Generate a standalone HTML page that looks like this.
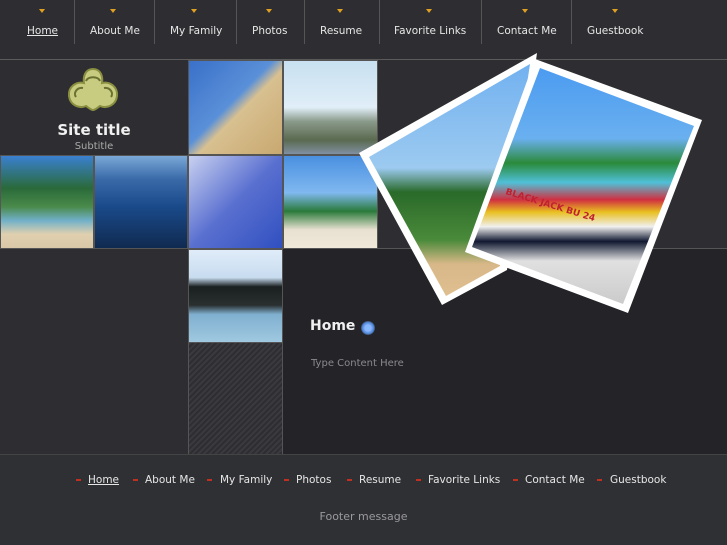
<!DOCTYPE html>
<html><head><style>
*{margin:0;padding:0;box-sizing:border-box}
body{width:727px;height:545px;overflow:hidden;background:#2e2e32;font-family:"DejaVu Sans","Liberation Sans",sans-serif;position:relative}
.a{position:absolute}
.nav{color:#e6e6e6;font-size:10.5px;top:25px;white-space:nowrap}
.car{position:absolute;top:9px;width:6px;height:4px;border-left:3px solid transparent;border-right:3px solid transparent;border-top:4px solid #e0a020}
.sep{position:absolute;top:0;width:1px;height:44px;background:#555}
.t{position:absolute;border:1px solid #555}
.f{color:#e6e6e6;font-size:10.5px;top:474px;white-space:nowrap}
.b{position:absolute;top:479px;width:5px;height:2px;background:#c03020}
</style></head><body>
<div class="a nav" style="left:27px;text-decoration:underline">Home</div>
<div class="a nav" style="left:90px">About Me</div>
<div class="a nav" style="left:170px">My Family</div>
<div class="a nav" style="left:252px">Photos</div>
<div class="a nav" style="left:320px">Resume</div>
<div class="a nav" style="left:394px">Favorite Links</div>
<div class="a nav" style="left:497px">Contact Me</div>
<div class="a nav" style="left:587px">Guestbook</div>
<div class="car" style="left:39px"></div><div class="car" style="left:110px"></div><div class="car" style="left:191px"></div><div class="car" style="left:266px"></div><div class="car" style="left:337px"></div><div class="car" style="left:426px"></div><div class="car" style="left:522px"></div><div class="car" style="left:612px"></div>
<div class="sep" style="left:74px"></div><div class="sep" style="left:154px"></div><div class="sep" style="left:236px"></div><div class="sep" style="left:304px"></div><div class="sep" style="left:379px"></div><div class="sep" style="left:481px"></div><div class="sep" style="left:571px"></div>
<div class="a" style="left:0;top:59px;width:727px;height:1px;background:#5a5a5a"></div>
<div class="a" style="left:0;top:60px;width:188px;height:95px;background:#2e2e32"></div>
<svg class="a" style="left:66px;top:67px" width="55" height="50" viewBox="0 0 55 50">
<path d="M27 2c8 0 10 8 9 14 8-2 16 4 15 13-1 9-10 13-17 10-3 2-5 4-7 4s-4-2-7-4c-7 3-16-1-17-10-1-9 7-15 15-13-1-6 1-14 9-14z" fill="#c8cc80" stroke="#8a9040" stroke-width="2"/>
<path d="M20 14c2-5 12-5 14 0M10 30c-3-4 1-10 7-9M45 30c3-4-1-10-7-9" fill="none" stroke="#6a7030" stroke-width="2"/>
</svg>
<div class="a" style="left:0;width:188px;top:121px;text-align:center;color:#f0f0f0;font-size:15px;font-weight:bold">Site title</div>
<div class="a" style="left:0;width:188px;top:141px;text-align:center;color:#aaa;font-size:10px">Subtitle</div>
<div class="t" style="left:188px;top:60px;width:95px;height:95px;background:linear-gradient(135deg,#3a70c8 0%,#5a90d8 45%,#d8c090 55%,#c8a870 100%)"></div>
<div class="t" style="left:283px;top:60px;width:95px;height:95px;background:linear-gradient(#c8e0f0 0%,#e0eef8 50%,#8a9a8a 65%,#5a6a50 85%,#8090a0 100%)"></div>
<div class="t" style="left:0;top:155px;width:94px;height:94px;background:linear-gradient(#3a80d0 0%,#2a6a3a 35%,#4a8a4a 55%,#70b0c8 70%,#e0d0b0 85%,#d8c8a8 100%)"></div>
<div class="t" style="left:94px;top:155px;width:94px;height:94px;background:linear-gradient(#7aa8d8 0%,#3a6aa8 25%,#1a4a8a 55%,#102a50 100%)"></div>
<div class="t" style="left:188px;top:155px;width:95px;height:94px;background:linear-gradient(135deg,#c8d0f0,#5a70d0 50%,#3050c0)"></div>
<div class="t" style="left:283px;top:155px;width:95px;height:94px;background:linear-gradient(#4a90e0 0%,#80b8f0 40%,#2a7a3a 60%,#e8e0d0 80%,#f0e8d8 100%)"></div>
<div class="t" style="left:188px;top:249px;width:95px;height:94px;background:linear-gradient(#e0ecf8 0%,#c8dcf0 30%,#1a2020 40%,#2a3030 60%,#80b0d0 70%,#a0c8e0 100%)"></div>
<div class="a" style="left:188px;top:343px;width:95px;height:112px;border-left:1px solid #555;border-right:1px solid #555;background:repeating-linear-gradient(135deg,#3a3a3e 0 2px,#2e2e32 2px 4px)"></div>
<div class="a" style="left:283px;top:249px;width:444px;height:206px;background:#232328"></div>
<div class="a" style="left:378px;top:248px;width:349px;height:1px;background:#555"></div>
<div class="a" style="left:0;top:248px;width:188px;height:1px;background:#555"></div>
<div class="a" style="left:310px;top:318px;color:#f0f0f0;font-size:14px;font-weight:bold">Home</div>
<div class="a" style="left:361px;top:321px;width:14px;height:14px;border-radius:50%;background:radial-gradient(#8ab8ff 30%,#4a80d0 60%,#333 75%)"></div>
<div class="a" style="left:311px;top:358px;color:#8a8a8e;font-size:10px">Type Content Here</div>
<svg class="a" style="left:0;top:0" width="727" height="545">
<defs>
<linearGradient id="g1" gradientUnits="userSpaceOnUse" x1="0" y1="60" x2="0" y2="300"><stop offset="0" stop-color="#70b0f0"/><stop offset=".45" stop-color="#9ccaf0"/><stop offset=".55" stop-color="#2a6a2a"/><stop offset=".75" stop-color="#4a8a3a"/><stop offset=".85" stop-color="#d8b888"/><stop offset="1" stop-color="#e0c090"/></linearGradient>
<linearGradient id="g2" gradientUnits="userSpaceOnUse" x1="0" y1="65" x2="0" y2="310"><stop offset="0" stop-color="#4a9af0"/><stop offset=".3" stop-color="#6ab0f0"/><stop offset=".4" stop-color="#2a8a3a"/><stop offset=".48" stop-color="#50c0d8"/><stop offset=".55" stop-color="#d03040"/><stop offset=".6" stop-color="#e8c020"/><stop offset=".66" stop-color="#f0f0f0"/><stop offset=".72" stop-color="#101830"/><stop offset=".8" stop-color="#e0e0e0"/><stop offset="1" stop-color="#c8c8c8"/></linearGradient>
</defs>
<polygon points="359,153 537,53 507,270 442,305" fill="#fff"/>
<polygon points="369,157 530,64 500,266 446,296" fill="url(#g1)"/>
<polygon points="535,59 702,120 628,313 465,252" fill="#fff"/>
<polygon points="540,68 694,126 623,304 472,247" fill="url(#g2)"/>
<text x="505" y="194" transform="rotate(17 505 194)" font-size="9" fill="#c02030" font-family="DejaVu Sans" font-weight="bold">BLACK JACK BU 24</text>
</svg>
<div class="a" style="left:0;top:454px;width:727px;height:1px;background:#444"></div>
<div class="a" style="left:0;top:455px;width:727px;height:90px;background:#2f3034"></div>
<div class="b" style="left:76px"></div><div class="b" style="left:133px"></div><div class="b" style="left:207px"></div><div class="b" style="left:284px"></div><div class="b" style="left:347px"></div><div class="b" style="left:416px"></div><div class="b" style="left:513px"></div><div class="b" style="left:597px"></div>
<div class="a f" style="left:88px;text-decoration:underline">Home</div>
<div class="a f" style="left:145px">About Me</div>
<div class="a f" style="left:220px">My Family</div>
<div class="a f" style="left:296px">Photos</div>
<div class="a f" style="left:359px">Resume</div>
<div class="a f" style="left:428px">Favorite Links</div>
<div class="a f" style="left:525px">Contact Me</div>
<div class="a f" style="left:610px">Guestbook</div>
<div class="a" style="left:0;width:727px;top:510px;text-align:center;color:#9a9a9e;font-size:11px">Footer message</div>
</body></html>
